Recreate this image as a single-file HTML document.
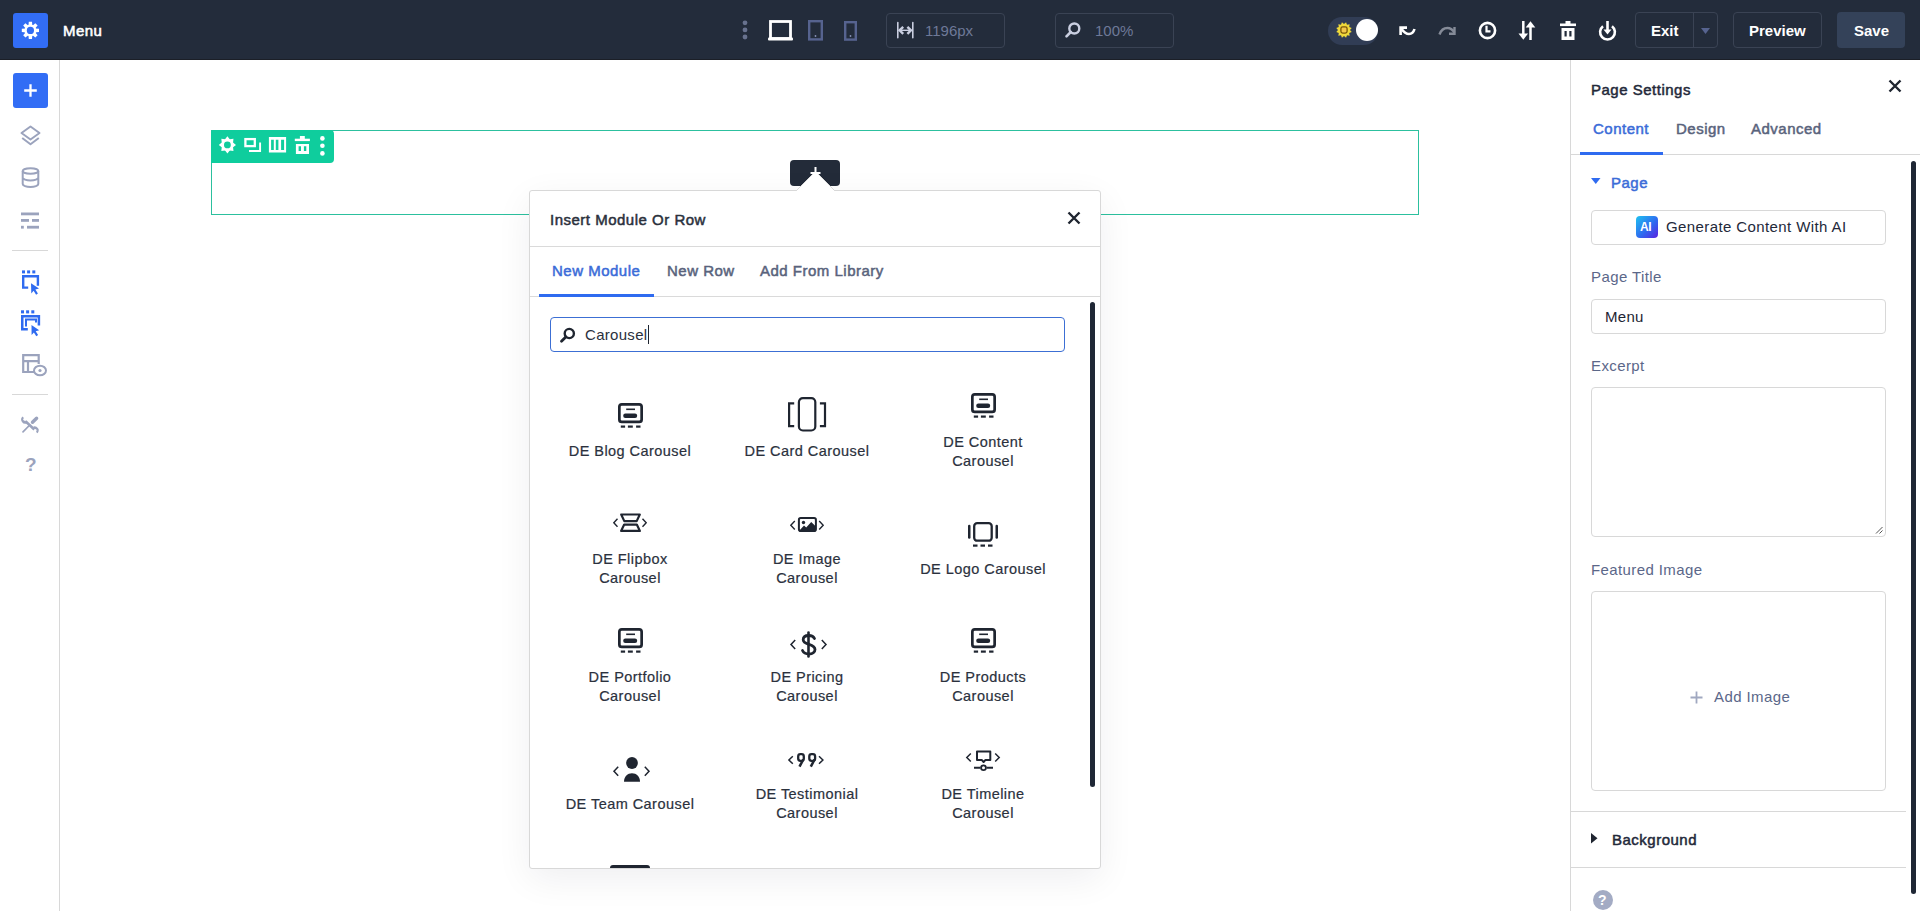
<!DOCTYPE html>
<html><head><meta charset="utf-8">
<style>
*{box-sizing:border-box;margin:0;padding:0}
html,body{width:1920px;height:911px;overflow:hidden;background:#fff;font-family:"Liberation Sans",sans-serif}
.a{position:absolute}
.t{position:absolute;white-space:nowrap;line-height:20px;font-size:15px}
#top{left:0;top:0;width:1920px;height:60px;background:#232c3b;border-bottom:1px solid #1b1f27}
#side{left:0;top:60px;width:60px;height:851px;background:#fff;border-right:1px solid #d8d8d8}
#panel{left:1570px;top:60px;width:350px;height:851px;background:#fff;border-left:1px solid #d8d8d8}
.tbox{border:1px solid #3a4354;border-radius:4px}
.lbl{color:#5b6789;letter-spacing:.4px}
.sb{font-weight:400;-webkit-text-stroke:.5px currentColor;letter-spacing:.5px}
.item{position:absolute;width:176px;text-align:center;font-size:14.5px;line-height:19px;color:#2b313d;letter-spacing:.45px;white-space:nowrap;-webkit-text-stroke:.2px #2b313d}
svg{position:absolute;overflow:visible}
</style></head><body>

<!-- TOP BAR -->
<div id="top" class="a"></div>
<div class="a" style="left:13px;top:12.5px;width:35px;height:35.5px;background:#326df5;border-radius:3px"></div>
<svg style="left:21px;top:21px" width="19" height="19" viewBox="0 0 19 19"><g fill="#fff" transform="translate(9.4,9.4)"><path d="M-1.6 -8.6H1.6L2 -4H-2z" transform="rotate(0)"/><path d="M-1.6 -8.6H1.6L2 -4H-2z" transform="rotate(45)"/><path d="M-1.6 -8.6H1.6L2 -4H-2z" transform="rotate(90)"/><path d="M-1.6 -8.6H1.6L2 -4H-2z" transform="rotate(135)"/><path d="M-1.6 -8.6H1.6L2 -4H-2z" transform="rotate(180)"/><path d="M-1.6 -8.6H1.6L2 -4H-2z" transform="rotate(225)"/><path d="M-1.6 -8.6H1.6L2 -4H-2z" transform="rotate(270)"/><path d="M-1.6 -8.6H1.6L2 -4H-2z" transform="rotate(315)"/><circle r="5.9"/></g><circle cx="9.4" cy="9.4" r="3.6" fill="#326df5"/></svg>
<div class="t" style="left:63px;top:21px;color:#fff;-webkit-text-stroke:.55px #fff;letter-spacing:.45px">Menu</div>

<!-- dots -->
<svg style="left:742px;top:20px" width="7" height="20"><circle cx="3" cy="2.8" r="2.4" fill="#68728e"/><circle cx="3" cy="9.9" r="2.4" fill="#68728e"/><circle cx="3" cy="17" r="2.4" fill="#68728e"/></svg>
<!-- laptop -->
<svg style="left:768px;top:20px" width="26" height="22"><rect x="2.5" y="1.5" width="20" height="17" fill="none" stroke="#fff" stroke-width="2.8"/><rect x="0" y="17.5" width="25" height="3" rx="1" fill="#fff"/></svg>
<!-- tablet -->
<svg style="left:808px;top:20px" width="16" height="21"><rect x="1.2" y="1.2" width="12.6" height="18.2" fill="none" stroke="#56638f" stroke-width="2.4"/><circle cx="7.5" cy="16" r="0.9" fill="#8893b6"/></svg>
<!-- phone -->
<svg style="left:844px;top:21px" width="14" height="20"><rect x="1.2" y="1.2" width="10.6" height="17.4" fill="none" stroke="#56638f" stroke-width="2.4"/><circle cx="6.5" cy="15" r="0.9" fill="#8893b6"/></svg>

<div class="a tbox" style="left:886px;top:13px;width:119px;height:35px"></div>
<svg style="left:897px;top:21px" width="17" height="18"><rect x="0" y="0.8" width="1.6" height="16.7" rx=".8" fill="#c9cee0"/><rect x="15" y="0.8" width="1.6" height="16.7" rx=".8" fill="#c9cee0"/><path d="M6.2 5.8L2.6 9.3l3.6 3.5M10.4 5.8l3.6 3.5-3.6 3.5" fill="none" stroke="#c9cee0" stroke-width="2.4"/><path d="M3 9.3h10.6" stroke="#c9cee0" stroke-width="1.4"/></svg>
<div class="t" style="left:925px;top:21px;color:#6e7998">1196px</div>

<div class="a tbox" style="left:1055px;top:13px;width:119px;height:35px"></div>
<svg style="left:1065px;top:22px" width="16" height="16"><circle cx="9.3" cy="6.5" r="5" fill="none" stroke="#c9cee0" stroke-width="2.4"/><path d="M5.8 10L1.5 14.3" stroke="#c9cee0" stroke-width="2.6" stroke-linecap="round"/></svg>
<div class="t" style="left:1095px;top:21px;color:#6e7998">100%</div>

<!-- toggle -->
<div class="a" style="left:1328px;top:17px;width:50px;height:28px;border-radius:14px;background:#313d55"></div>
<svg style="left:1335.5px;top:22.4px" width="16" height="16" viewBox="0 0 16 16"><path fill="#efd93a" d="M10.07 0.27 L11.00 2.80 L13.66 2.34 L13.20 5.00 L15.73 5.93 L14.00 8.00 L15.73 10.07 L13.20 11.00 L13.66 13.66 L11.00 13.20 L10.07 15.73 L8.00 14.00 L5.93 15.73 L5.00 13.20 L2.34 13.66 L2.80 11.00 L0.27 10.07 L2.00 8.00 L0.27 5.93 L2.80 5.00 L2.34 2.34 L5.00 2.80 L5.93 0.27 L8.00 2.00Z"/><rect x="4.9" y="4.9" width="6.2" height="6.2" rx="1.8" fill="#f3c94a" stroke="#7a5608" stroke-width="1.3"/></svg>
<div class="a" style="left:1356px;top:19px;width:22px;height:22px;border-radius:50%;background:#fff"></div>
<!-- undo -->
<svg style="left:1398px;top:25px" width="19" height="11"><path d="M2.6 10V2.6H9" fill="none" stroke="#fff" stroke-width="2.6"/><path d="M3.2 3.5C6 7.5 8.5 9 11 9c2.7 0 4.5-1.6 5.5-5" fill="none" stroke="#fff" stroke-width="2.6"/></svg>
<!-- redo -->
<svg style="left:1438px;top:26px" width="19" height="10"><path d="M1.5 8.5C3 4 6 2 9.5 2c2.8 0 5 1.5 6.8 4.5" fill="none" stroke="#858b98" stroke-width="2.4"/><path d="M16.5 1v6.7H11" fill="none" stroke="#858b98" stroke-width="2.4"/></svg>
<!-- clock -->
<svg style="left:1478px;top:21px" width="19" height="19"><circle cx="9.5" cy="9.5" r="7.6" fill="none" stroke="#fff" stroke-width="2.6"/><path d="M8.5 4.8v5.5h4" fill="none" stroke="#fff" stroke-width="2.2"/></svg>
<!-- arrows -->
<svg style="left:1518px;top:21px" width="18" height="19"><path d="M5.3 0v13" stroke="#fff" stroke-width="2.5"/><path d="M0.5 12.5h9.6L5.3 18.7z" fill="#fff"/><path d="M12.5 19V6" stroke="#fff" stroke-width="2.5"/><path d="M7.7 6.5h9.6L12.5 0.3z" fill="#fff"/></svg>
<!-- trash -->
<svg style="left:1560px;top:21px" width="16" height="19"><rect x="5.5" y="0" width="5" height="3" fill="#fff"/><rect x="0" y="2.5" width="16" height="2.6" fill="#fff"/><path d="M1.5 7h13v12h-13z M4.5 10v5.5h2.2V10z M9.3 10v5.5h2.2V10z" fill="#fff" fill-rule="evenodd"/></svg>
<!-- power -->
<svg style="left:1598px;top:21px" width="19" height="19"><path d="M5 5.2a7.4 7.4 0 1 0 9 0" fill="none" stroke="#fff" stroke-width="2.6"/><path d="M9.5 0v10" stroke="#fff" stroke-width="2.6"/><path d="M5.5 8.5h8l-4 5z" fill="#fff"/></svg>

<div class="a tbox" style="left:1635px;top:12px;width:83px;height:36px"></div>
<div class="a" style="left:1693px;top:13px;width:1px;height:34px;background:#3a4354"></div>
<div class="t" style="left:1651px;top:21px;color:#fff;font-weight:700;">Exit</div>
<svg style="left:1701px;top:28px" width="10" height="7"><path d="M0 0h9l-4.5 6z" fill="#56638f"/></svg>
<div class="a tbox" style="left:1733px;top:12px;width:89px;height:36px"></div>
<div class="t" style="left:1749px;top:21px;color:#fff;font-weight:700;">Preview</div>
<div class="a" style="left:1837px;top:12px;width:68px;height:36px;background:#344259;border-radius:4px"></div>
<div class="t" style="left:1854px;top:21px;color:#fff;font-weight:700;">Save</div>

<!-- LEFT SIDEBAR -->
<div id="side" class="a"></div>
<div class="a" style="left:13px;top:73px;width:35px;height:35px;background:#326df5;border-radius:3px"></div>
<svg style="left:23px;top:83px" width="15" height="15"><path d="M7.5 1.2v12.6M1.2 7.5h12.6" stroke="#fff" stroke-width="2.3"/></svg>
<!-- layers -->
<svg style="left:20px;top:125px" width="22" height="24"><path d="M10.5 1.5l9 6.5-9 6.5-9-6.5z" fill="none" stroke="#9ba3bd" stroke-width="2" stroke-linejoin="round"/><path d="M2.2 13l8.3 6.3 8.3-6.3" fill="none" stroke="#9ba3bd" stroke-width="2" stroke-linejoin="round"/></svg>
<!-- db -->
<svg style="left:21px;top:167px" width="19" height="22"><ellipse cx="9.5" cy="4" rx="7.8" ry="2.8" fill="none" stroke="#9ba3bd" stroke-width="2"/><path d="M1.7 4v13c0 1.6 3.5 3 7.8 3s7.8-1.4 7.8-3V4M1.7 10.5c0 1.6 3.5 3 7.8 3s7.8-1.4 7.8-3" fill="none" stroke="#9ba3bd" stroke-width="2"/></svg>
<!-- list -->
<svg style="left:21px;top:212px" width="19" height="18"><rect x="0" y="0.5" width="18" height="2.8" fill="#9ba3bd"/><rect x="0" y="7" width="8" height="2.8" fill="#9ba3bd"/><rect x="11" y="7" width="7" height="2.8" fill="#9ba3bd"/><rect x="0" y="13.8" width="2.8" height="2.8" fill="#9ba3bd"/><rect x="6" y="13.8" width="12" height="2.8" fill="#9ba3bd"/></svg>
<div class="a" style="left:12px;top:250px;width:36px;height:1px;background:#d8d8d8"></div>
<!-- blue icon 1 -->
<svg style="left:22px;top:270px" width="19" height="26"><rect x="0" y="0.4" width="3" height="3" fill="#2f6bf0"/><rect x="5.1" y="0.4" width="3" height="3" fill="#2f6bf0"/><rect x="10.3" y="0.4" width="3" height="3" fill="#2f6bf0"/><path d="M6.2 17.6H1.2V6.2H15.9V15.8" fill="none" stroke="#2f6bf0" stroke-width="2.4"/><path d="M9 13.3L17 18.6l-3.6 1 2.5 4-1.8 1.2-2.5-4-2.3 2.6z" fill="#2f6bf0"/></svg>
<!-- blue icon 2 -->
<svg style="left:20.5px;top:310px" width="20" height="27"><rect x="0" y="0.3" width="3" height="3.1" fill="#2f6bf0"/><rect x="5.1" y="0.3" width="3" height="3.1" fill="#2f6bf0"/><rect x="10.3" y="0.3" width="3" height="3.1" fill="#2f6bf0"/><path d="M6.8 19.2H1.25V6.2H17.9V15.5" fill="none" stroke="#2f6bf0" stroke-width="2.5"/><path d="M5 16.5V9.6H15V12.5" fill="none" stroke="#2f6bf0" stroke-width="2"/><path d="M10.5 15L18.2 20.2l-3.5 1 2.4 3.8-1.8 1.2-2.4-3.8-2.3 2.5z" fill="#2f6bf0"/></svg>
<!-- gray icon 3 -->
<svg style="left:22px;top:354px" width="25" height="23"><path d="M13 18H1.2V1.2h15.5V10M1.2 7.2h15.5M6 7.2V18" fill="none" stroke="#9ba3bd" stroke-width="2.2"/><ellipse cx="18" cy="16.5" rx="6" ry="4.8" fill="#fff" stroke="#9ba3bd" stroke-width="2"/><circle cx="18" cy="16.5" r="1.6" fill="#9ba3bd"/></svg>
<div class="a" style="left:12px;top:394px;width:36px;height:1px;background:#d8d8d8"></div>
<!-- tools -->
<svg style="left:21px;top:416px" width="18" height="18"><path d="M2 15.8L8.8 9" stroke="#9ba3bd" stroke-width="1.7" stroke-linecap="round"/><path d="M11.5 6.3L15.6 2.2" stroke="#9ba3bd" stroke-width="3.4" stroke-linecap="round"/><path d="M4.5 5.2L13.3 13.5" stroke="#9ba3bd" stroke-width="2.6"/><path d="M2.2 1.2A3.2 3.2 0 0 0 5.8 6.4M1 3.2A3.2 3.2 0 0 0 4.8 5.8" fill="none" stroke="#9ba3bd" stroke-width="2"/><path d="M15.8 16.6A3.2 3.2 0 0 0 12.6 11.4M17 14.6A3.2 3.2 0 0 0 13.4 12" fill="none" stroke="#9ba3bd" stroke-width="2"/></svg>
<div class="t" style="left:25px;top:455px;color:#9ba3bd;font-size:19px;font-weight:700">?</div>

<!-- CANVAS ROW -->
<div class="a" style="left:211px;top:130px;width:1208px;height:85px;border:1px solid #2cc09e"></div>
<div class="a" style="left:211px;top:130px;width:123px;height:33px;background:#0fcd9d;border-radius:3px 4px 4px 0"></div>
<svg style="left:211px;top:130px" width="123" height="33">
 <path fill="#fff" d="M16.40 6.30 L18.73 9.26 L22.48 8.82 L22.04 12.57 L25.00 14.90 L22.04 17.23 L22.48 20.98 L18.73 20.54 L16.40 23.50 L14.07 20.54 L10.32 20.98 L10.76 17.23 L7.80 14.90 L10.76 12.57 L10.32 8.82 L14.07 9.26Z"/><circle cx="16.4" cy="14.9" r="6" fill="#fff"/><circle cx="16.4" cy="14.9" r="3.4" fill="#0fcd9d"/>
 <rect x="34.4" y="9.1" width="9.4" height="7" fill="none" stroke="#fff" stroke-width="2.3"/><path d="M49.1 12.4V21H38" fill="none" stroke="#fff" stroke-width="1.9"/>
 <path fill="#fff" fill-rule="evenodd" d="M57.9 7.1h17.2v15.3H57.9zM60.1 9.7v10.2h2.7V9.7zM64.8 9.7v10.2h2.6V9.7zM70.1 9.7v10.2h3V9.7z"/>
 <rect x="88.9" y="6" width="4.9" height="3" fill="#fff"/><rect x="83.8" y="8.7" width="15.1" height="2.4" fill="#fff"/><path fill="#fff" fill-rule="evenodd" d="M84.9 14h13.1v9.9H84.9zM87.6 16.2v4.8H90v-4.8zM92.9 16.2v4.8h2.4v-4.8z"/>
 <circle cx="111.4" cy="8.4" r="2.3" fill="#fff"/><circle cx="111.4" cy="15.8" r="2.3" fill="#fff"/><circle cx="111.4" cy="23.4" r="2.3" fill="#fff"/>
</svg>

<!-- MODAL -->
<div class="a" style="left:790px;top:160px;width:50px;height:26px;background:#232b39;border-radius:4px"></div>
<div class="a" style="left:529px;top:190px;width:572px;height:679px;background:#fff;border:1px solid #d8d8d8;border-radius:3px;box-shadow:0 10px 36px rgba(20,20,40,.065)"></div>
<svg style="left:796px;top:164px" width="40" height="28"><path d="M0 27L19.5 7.5 39 27" fill="#fff" stroke="#dadada" stroke-width="1"/><path d="M1 28L19.5 8.5 38 28z" fill="#fff"/><path d="M19.5 3v8.5M14.5 9h10" stroke="#fff" stroke-width="2"/></svg>
<div class="t sb" style="left:550px;top:210px;color:#2b313d;">Insert Module Or Row</div>
<svg style="left:1067px;top:211px" width="14" height="14"><path d="M1.5 1.5l11 11M12.5 1.5l-11 11" stroke="#1f2530" stroke-width="2.4"/></svg>
<div class="a" style="left:530px;top:246px;width:570px;height:1px;background:#dadada"></div>
<div class="t sb" style="left:552px;top:261px;color:#3b6cd8;">New Module</div>
<div class="t sb" style="left:667px;top:261px;color:#59637c;">New Row</div>
<div class="t sb" style="left:760px;top:261px;color:#59637c;">Add From Library</div>
<div class="a" style="left:530px;top:296px;width:570px;height:1px;background:#dadada"></div>
<div class="a" style="left:539px;top:294px;width:115px;height:3px;background:#2f6bf0"></div>
<div class="a" style="left:1090px;top:302px;width:5px;height:485px;background:#1f2735;border-radius:3px"></div>

<div class="a" style="left:550px;top:317px;width:515px;height:35px;border:1px solid #3c6fd4;border-radius:4px"></div>
<svg style="left:560px;top:327px" width="16" height="16"><circle cx="9.3" cy="6.5" r="4.6" fill="none" stroke="#1f2530" stroke-width="2.4"/><path d="M5.8 10L1.5 14.3" stroke="#1f2530" stroke-width="2.8" stroke-linecap="round"/></svg>
<div class="t" style="left:585px;top:325px;color:#2b313d;letter-spacing:.3px">Carousel</div>
<div class="a" style="left:648px;top:325px;width:1px;height:19px;background:#1f2530"></div>

<!-- ITEMS -->
<div class="item" style="left:542px;top:442px">DE Blog Carousel</div>
<div class="item" style="left:719px;top:442px">DE Card Carousel</div>
<div class="item" style="left:895px;top:433px">DE Content<br>Carousel</div>
<div class="item" style="left:542px;top:550px">DE Flipbox<br>Carousel</div>
<div class="item" style="left:719px;top:550px">DE Image<br>Carousel</div>
<div class="item" style="left:895px;top:560px">DE Logo Carousel</div>
<div class="item" style="left:542px;top:668px">DE Portfolio<br>Carousel</div>
<div class="item" style="left:719px;top:668px">DE Pricing<br>Carousel</div>
<div class="item" style="left:895px;top:668px">DE Products<br>Carousel</div>
<div class="item" style="left:542px;top:795px">DE Team Carousel</div>
<div class="item" style="left:719px;top:785px">DE Testimonial<br>Carousel</div>
<div class="item" style="left:895px;top:785px">DE Timeline<br>Carousel</div>

<!-- blog-like icon def -->
<svg width="0" height="0" style="position:absolute"><defs>
<g id="blog"><rect x="1.35" y="1.35" width="22.3" height="17.6" rx="2.5" fill="none" stroke="#1f2530" stroke-width="2.7"/><path d="M8.2 6.3h8.8" stroke="#1f2530" stroke-width="1.6"/><rect x="5.2" y="10.5" width="14" height="4.4" rx="2.2" fill="#1f2530"/><rect x="2.8" y="22.5" width="4.3" height="2.2" fill="#1f2530"/><rect x="9.9" y="22.5" width="4.9" height="2.2" fill="#1f2530"/><rect x="18.1" y="22.5" width="4.4" height="2.2" fill="#1f2530"/></g>
</defs></svg>
<svg style="left:617.5px;top:402.5px" width="25" height="25"><use href="#blog"/></svg>
<svg style="left:970.5px;top:392.5px" width="25" height="25"><use href="#blog"/></svg>
<svg style="left:617.5px;top:627.5px" width="25" height="25"><use href="#blog"/></svg>
<svg style="left:970.5px;top:627.5px" width="25" height="25"><use href="#blog"/></svg>
<!-- card -->
<svg style="left:787.5px;top:397px" width="38" height="35"><rect x="10.9" y="1.1" width="16.4" height="32.4" rx="4" fill="none" stroke="#1f2530" stroke-width="2.2"/><path d="M6.2 6.4H1.1v22.8h5.1M31.9 6.4H37v22.8h-5.1" fill="none" stroke="#1f2530" stroke-width="2.2"/></svg>
<!-- flipbox -->
<svg style="left:613px;top:513px" width="34" height="19"><path d="M8.2 1.5h18.6l-3.1 6.6H11.3zM11.2 11.6h12.6l3.1 6.3H8.1z" fill="none" stroke="#1f2530" stroke-width="2.2" stroke-linejoin="round"/><path d="M4.5 5.8L0.8 9.8l3.7 4M29.5 5.8l3.7 4-3.7 4" fill="none" stroke="#1f2530" stroke-width="1.4"/></svg>
<!-- image -->
<svg style="left:790px;top:517px" width="34" height="15"><rect x="8.9" y="1" width="17" height="13" rx="1.8" fill="none" stroke="#1f2530" stroke-width="2"/><path d="M9 14l5-5.5 2.2 2 5-5.4 4.7 4.3V14z" fill="#1f2530"/><circle cx="13.5" cy="5.5" r="1.7" fill="#1f2530"/><path d="M4.8 4L0.8 8.3l4 4.2M29.2 4l4 4.3-4 4.2" fill="none" stroke="#1f2530" stroke-width="1.4"/></svg>
<!-- logo -->
<svg style="left:968px;top:522px" width="30" height="25"><rect x="0" y="2.8" width="2.5" height="14" rx="1.2" fill="#1f2530"/><rect x="27.5" y="2.8" width="2.5" height="14" rx="1.2" fill="#1f2530"/><rect x="6.2" y="1.2" width="17.5" height="17.5" rx="3" fill="none" stroke="#1f2530" stroke-width="2.3"/><rect x="5" y="22.5" width="4.5" height="2.2" fill="#1f2530"/><rect x="12.5" y="22.5" width="4.5" height="2.2" fill="#1f2530"/><rect x="20" y="22.5" width="4.5" height="2.2" fill="#1f2530"/></svg>
<!-- pricing -->
<svg style="left:790px;top:632px" width="37" height="25"><path d="M5.2 8L1 12.5l4.2 4.5M31.8 8l4.2 4.5-4.2 4.5" fill="none" stroke="#1f2530" stroke-width="1.5"/><path d="M18.5 0.5v24" stroke="#1f2530" stroke-width="2.6" stroke-linecap="round"/><path d="M24.5 6.5c-.8-1.8-2.8-3-5.8-3-3.5 0-5.5 1.8-5.5 4.2 0 5.8 11.8 3.6 11.8 9.8 0 2.6-2.3 4.5-6 4.5-3.3 0-5.5-1.4-6.5-3.5" fill="none" stroke="#1f2530" stroke-width="2.8" stroke-linecap="round"/></svg>
<!-- team -->
<svg style="left:613px;top:757px" width="37" height="25"><circle cx="19" cy="6" r="5.9" fill="#1f2530"/><path d="M11 24.8c0-5.3 3.6-8.5 8-8.5s8 3.2 8 8.5z" fill="#1f2530"/><path d="M5.2 9.8L1 14.3l4.2 4.5M31.8 9.8l4.2 4.5-4.2 4.5" fill="none" stroke="#1f2530" stroke-width="1.5"/></svg>
<!-- testimonial -->
<svg style="left:788px;top:753px" width="36" height="14"><path d="M4.8 3.3L0.9 7l3.9 3.8M31 3.3l3.9 3.7L31 10.8" fill="none" stroke="#1f2530" stroke-width="1.5"/><rect x="10.2" y="1.2" width="5.6" height="6.6" rx="2.2" fill="none" stroke="#1f2530" stroke-width="2.3"/><path d="M15.3 6.5L11.5 13.6" stroke="#1f2530" stroke-width="2.5"/><rect x="21.3" y="1.2" width="5.8" height="6.6" rx="2.2" fill="none" stroke="#1f2530" stroke-width="2.3"/><path d="M26.6 6.5L22.8 13.6" stroke="#1f2530" stroke-width="2.5"/></svg>
<!-- timeline -->
<svg style="left:966px;top:750px" width="34" height="21"><path d="M4.8 3.5L0.8 7.5l4 4M29.2 3.5l4 4-4 4" fill="none" stroke="#1f2530" stroke-width="1.5"/><path d="M11 1.4h13.3v8.5h-4.8L17.6 12l-1.9-2.1H11z" fill="none" stroke="#1f2530" stroke-width="2" stroke-linejoin="round"/><path d="M8 17.7h6.5M20.5 17.7H27" stroke="#1f2530" stroke-width="2"/><circle cx="17.5" cy="17.7" r="2.4" fill="none" stroke="#1f2530" stroke-width="1.8"/></svg>
<!-- partial row 5 -->
<div class="a" style="left:610px;top:865px;width:40px;height:3px;background:#1f2530;border-radius:3px 3px 0 0"></div>

<!-- RIGHT PANEL -->
<div id="panel" class="a"></div>
<div class="t sb" style="left:1591px;top:80px;color:#23293a;">Page Settings</div>
<svg style="left:1888px;top:79px" width="14" height="14"><path d="M1.5 1.5l11 11M12.5 1.5l-11 11" stroke="#1f2530" stroke-width="2.4"/></svg>
<div class="t sb" style="left:1593px;top:119px;color:#3b6cd8;">Content</div>
<div class="t sb" style="left:1676px;top:119px;color:#59637c;">Design</div>
<div class="t sb" style="left:1751px;top:119px;color:#59637c;">Advanced</div>
<div class="a" style="left:1571px;top:154px;width:349px;height:1px;background:#d8d8d8"></div>
<div class="a" style="left:1580px;top:152px;width:83px;height:3px;background:#2f6bf0"></div>
<div class="a" style="left:1911px;top:161px;width:5px;height:733px;background:#1f2735;border-radius:3px"></div>

<svg style="left:1591px;top:178px" width="10" height="7"><path d="M0 0h9.5L4.75 6z" fill="#2f6bf0"/></svg>
<div class="t sb" style="left:1611px;top:173px;color:#3b6cd8;">Page</div>

<div class="a" style="left:1591px;top:210px;width:295px;height:35px;border:1px solid #d8d8d8;border-radius:4px"></div>
<div class="a" style="left:1636px;top:216px;width:22px;height:22px;border-radius:4px;background:linear-gradient(135deg,#1fc3f0 0%,#2f6bf0 55%,#5b22e0 100%)"></div>
<div class="t" style="left:1640px;top:217px;color:#fff;font-weight:700;font-size:12px;letter-spacing:-.5px">AI</div>
<div class="t" style="left:1666px;top:217px;color:#23293a;letter-spacing:.4px">Generate Content With AI</div>

<div class="t lbl" style="left:1591px;top:267px">Page Title</div>
<div class="a" style="left:1591px;top:299px;width:295px;height:35px;border:1px solid #d8d8d8;border-radius:4px"></div>
<div class="t" style="left:1605px;top:307px;color:#1e2533;letter-spacing:.3px">Menu</div>

<div class="t lbl" style="left:1591px;top:356px">Excerpt</div>
<div class="a" style="left:1591px;top:387px;width:295px;height:150px;border:1px solid #d8d8d8;border-radius:4px"></div>
<svg style="left:1875px;top:526px" width="8" height="8"><path d="M7.5 1L1 7.5M7.5 4.5L4.5 7.5" stroke="#555" stroke-width="1"/></svg>

<div class="t lbl" style="left:1591px;top:560px">Featured Image</div>
<div class="a" style="left:1591px;top:591px;width:295px;height:200px;border:1px solid #d8d8d8;border-radius:4px"></div>
<svg style="left:1690px;top:691px" width="13" height="13"><path d="M6.5 0.5v12M0.5 6.5h12" stroke="#a0a8c0" stroke-width="1.8"/></svg>
<div class="t lbl" style="left:1714px;top:687px">Add Image</div>

<div class="a" style="left:1571px;top:811px;width:335px;height:1px;background:#d8d8d8"></div>
<svg style="left:1591px;top:833px" width="7" height="11"><path d="M0 0v10.5l6.5-5.25z" fill="#1f2530"/></svg>
<div class="t sb" style="left:1612px;top:830px;color:#23293a;">Background</div>
<div class="a" style="left:1571px;top:867px;width:335px;height:1px;background:#d8d8d8"></div>
<div class="a" style="left:1593px;top:890px;width:20px;height:20px;border-radius:50%;background:#a3abc4"></div>
<div class="t" style="left:1598px;top:890px;color:#fff;font-weight:700;font-size:14px">?</div>

</body></html>
